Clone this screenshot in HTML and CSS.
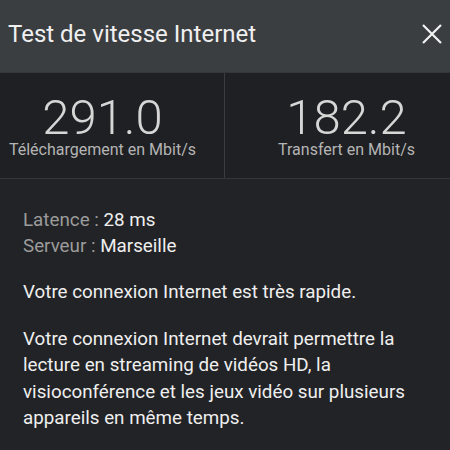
FILE: index.html
```html
<!DOCTYPE html>
<html lang="fr">
<head>
    <meta charset="UTF-8">
    <meta name="viewport" content="width=device-width, initial-scale=1.0">
    <title>Test de vitesse Internet</title>
    <link rel="stylesheet" href="styles.css">
</head>
<body>

    <div class="header">
        <div class="title">Test de vitesse Internet</div>
        <svg class="close" width="20" height="20" viewBox="0 0 20 20">
            <path d="M1 1 L19 19 M19 1 L1 19" stroke="#f2f2f2" stroke-width="2.2" fill="none"/>
        </svg>
    </div>

    <div class="stats">
        <div class="stat down">
            <div class="num">291.0</div>
            <div class="unit">Téléchargement en Mbit/s</div>
        </div>
        <div class="stat up">
            <div class="num">182.2</div>
            <div class="unit">Transfert en Mbit/s</div>
        </div>
    </div>

    <div class="content">
        <div class="info">
            <div><span class="key">Latence :</span> 28 ms</div>
            <div><span class="key">Serveur :</span> Marseille</div>
        </div>
        <p>Votre connexion Internet est très rapide.</p>
        <p>Votre connexion Internet devrait permettre la lecture en streaming de vidéos HD, la visioconférence et les jeux vidéo sur plusieurs appareils en même temps.</p>
    </div>

</body>
</html>
```

FILE: styles.css
```css
body {
    margin: 0;
    width: 450px;
    height: 450px;
    overflow: hidden;
    background-color: #222326;
    font-family: Roboto, "Liberation Sans", sans-serif;
}

.header {
    height: 72px;
    background-color: #3b3e41;
    display: flex;
    align-items: center;
    justify-content: space-between;
    padding: 0 8px 5px 8px;
    box-sizing: border-box;
}

.title {
    font-size: 24px;
    color: #f0f0f0;
}

.stats {
    display: grid;
    grid-template-columns: 225px 1fr;
    height: 107px;
    background-color: #1f2023;
    border-top: 1px solid #34373a;
    border-bottom: 1px solid #34373a;
    box-sizing: border-box;
}

.stat {
    text-align: center;
    padding-top: 23px;
}

.down {
    border-right: 1px solid #3a3d40;
    padding-right: 19px;
}

.up {
    padding-left: 18px;
}

.num {
    font-size: 49px;
    font-weight: 300;
    color: #d6d6d6;
    line-height: 44px;
}

.unit {
    font-size: 16px;
    color: #b4b4b4;
    line-height: 20px;
}

.content {
    padding: 28px 23px 0 23px;
    font-size: 18.8px;
    color: #efefef;
}

.info {
    line-height: 26px;
}

.key {
    color: #9c9c9c;
}

p {
    margin: 20px 0 0 0;
    line-height: 26.6px;
}
```
